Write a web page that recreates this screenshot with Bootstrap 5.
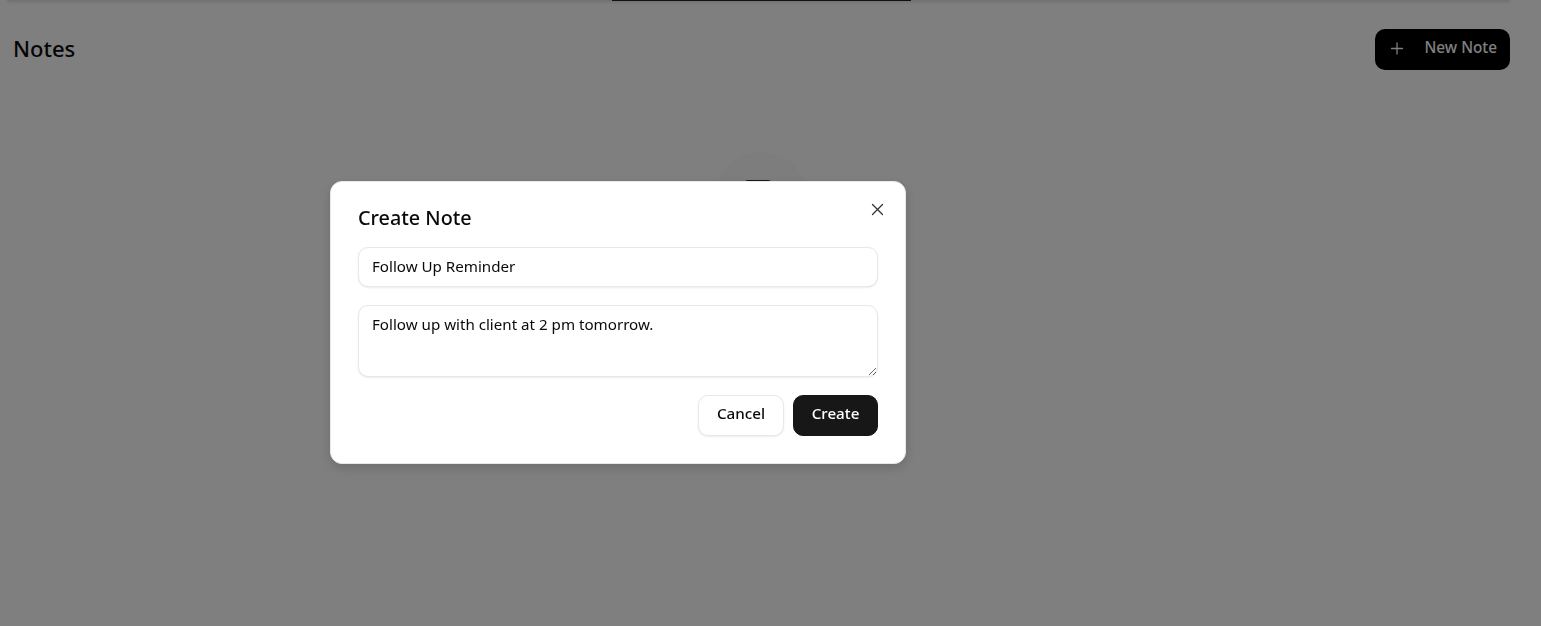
<!DOCTYPE html>
<html lang="en">
<head>
<meta charset="utf-8">
<title>Notes</title>
<link href="https://cdn.jsdelivr.net/npm/bootstrap@5.3.0/dist/css/bootstrap.min.css" rel="stylesheet">
<style>
html,body{height:100%;overflow:hidden}
body{font-family:"Noto Sans","Open Sans",sans-serif;background:#fff;color:#0a0a0a}
.page-shell{padding:0 31px 0 13px}
.top-rule{height:1px;margin-left:-6px;background:#e2e2e2;box-shadow:0 1px 3px rgba(0,0,0,.25);position:relative}
.top-tab{position:absolute;left:605px;top:0;width:299px;height:1px;background:#222}
.page-head{padding-top:28px}
.page-title{font-size:22px;font-weight:500;line-height:39px;margin:0 0 2px}
.new-btn{background:#000;color:#fff;height:41px;width:135px;border-radius:10px;font-size:15.3px;font-weight:500;padding:0 13px 4px 15px;border:0}
.new-btn:hover{background:#000;color:#fff}
.empty-disc{width:94px;height:94px;border-radius:50%;background:#fafafa;margin:82px 0 0 701px;position:relative}
.empty-mark{position:absolute;left:31px;top:28px;width:26px;height:30px;background:#333;border-radius:3px}
.dim-layer{position:fixed;inset:0;background:rgba(0,0,0,.5);z-index:10}
.note-dialog{position:fixed;left:330px;top:181px;width:576px;height:283px;z-index:20;background:#fff;border:1px solid #e8e8e8;border-radius:12px;box-shadow:0 4px 12px rgba(0,0,0,.15);padding:27px;margin:0}
.dialog-title{font-size:19.8px;font-weight:500;line-height:20px;margin:-1px 0 19px}
.dialog-close{position:absolute;right:20px;top:20px;width:15px;height:15px;padding:0;border:0;background:none;line-height:0;color:#333}
.note-field{border:1px solid #e8e8e8;border-radius:10px;box-shadow:0 1px 2px rgba(0,0,0,.08);font-size:15.15px;color:#0a0a0a;padding:0 13px;width:520px;display:block}
input.note-field{height:40px;padding-bottom:2px;margin-bottom:18px}
textarea.note-field{height:72px;padding-top:8px;line-height:20px;margin-bottom:18px;resize:vertical}
.act-btn{height:41px;border-radius:10px;font-size:15.2px;font-weight:500;padding:0 0 5px;display:flex;align-items:center;justify-content:center}
.act-cancel{width:86px;background:#fff;border:1px solid #e8e8e8;color:#0a0a0a;box-shadow:0 1px 2px rgba(0,0,0,.08)}
.act-create{width:85px;background:#171717;border:1px solid #171717;color:#fff}
.act-create:hover{background:#171717;color:#fff}
.act-gap{gap:9px}
</style>
</head>
<body>
<div class="page-shell">
  <div class="top-rule"><div class="top-tab"></div></div>
  <div class="page-head d-flex justify-content-between align-items-center">
    <h1 class="page-title">Notes</h1>
    <button class="btn new-btn d-flex align-items-center justify-content-between" type="button">
      <svg width="16" height="16" viewBox="0 0 16 16" fill="none" stroke="currentColor" stroke-width="1.3" stroke-linecap="round"><path d="M7 3v11M1.5 8.5h11"/></svg>
      <span>New Note</span>
    </button>
  </div>
  <div class="empty-disc"><div class="empty-mark"></div></div>
</div>
<div class="dim-layer"></div>
<div class="note-dialog" role="dialog">
  <h2 class="dialog-title">Create Note</h2>
  <button class="dialog-close" type="button" aria-label="Close">
    <svg width="15" height="15" viewBox="0 0 15 15" fill="none" stroke="currentColor" stroke-width="1.3" stroke-linecap="round"><path d="M2.5 2.5l10 10M12.5 2.5l-10 10"/></svg>
  </button>
  <input class="form-control note-field" type="text" value="Follow Up Reminder">
  <textarea class="form-control note-field">Follow up with client at 2 pm tomorrow.</textarea>
  <div class="d-flex justify-content-end act-gap">
    <button class="btn act-btn act-cancel" type="button">Cancel</button>
    <button class="btn act-btn act-create" type="button">Create</button>
  </div>
</div>
<script src="https://cdn.jsdelivr.net/npm/bootstrap@5.3.0/dist/js/bootstrap.bundle.min.js"></script>
</body>
</html>
